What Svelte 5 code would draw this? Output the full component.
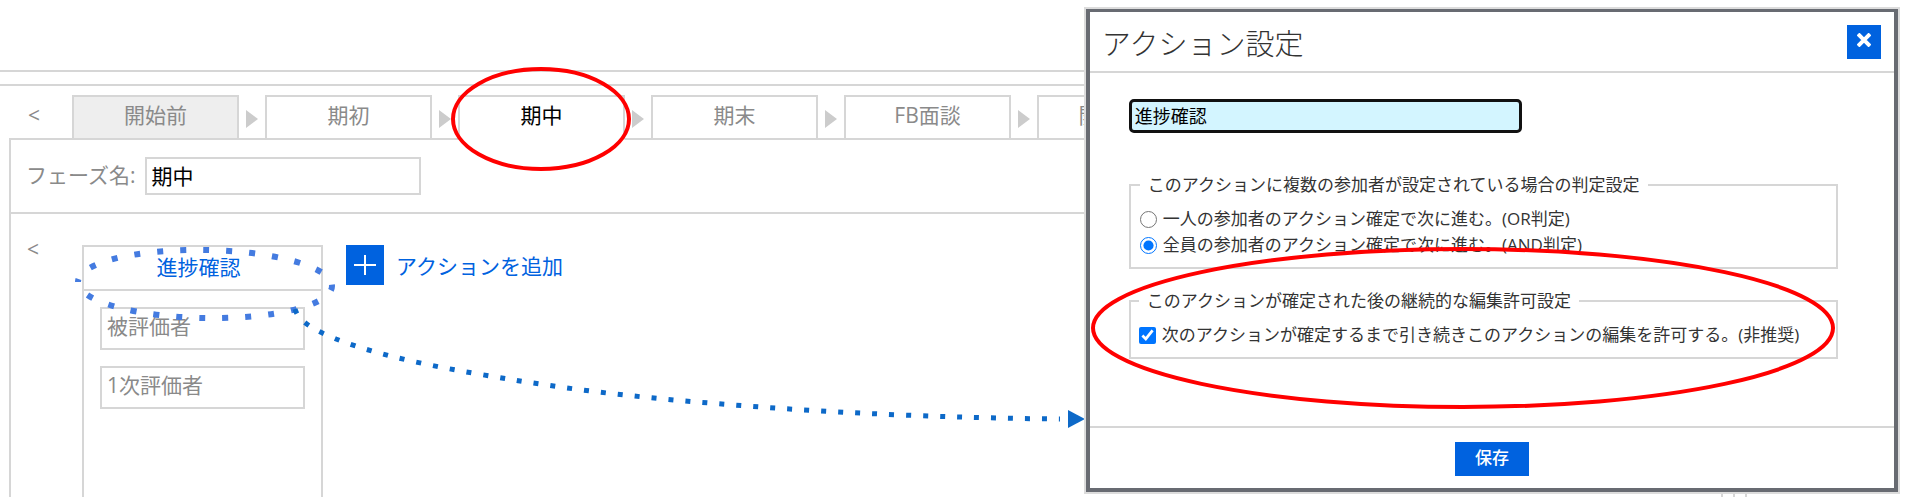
<script lang="ts">
	interface Phase {
		id: number;
		name: string;
		closed?: boolean;
	}

	const phases: Phase[] = [
		{ id: 1, name: '開始前', closed: true },
		{ id: 2, name: '期初' },
		{ id: 3, name: '期中' },
		{ id: 4, name: '期末' },
		{ id: 5, name: 'FB面談' },
		{ id: 6, name: '開示面談' }
	];
	const participants = ['被評価者', '1次評価者'];
	const judgeOptions = [
		{ value: 'or', label: '一人の参加者のアクション確定で次に進む。(OR判定)' },
		{ value: 'and', label: '全員の参加者のアクション確定で次に進む。(AND判定)' }
	];

	let activeId = $state(3);
	let phaseName = $state('期中');
	let actionName = $state('進捗確認');
	let judge = $state('and');
	let allowEdit = $state(true);
	let dialogOpen = $state(true);

	function selectPhase(phase: Phase) {
		activeId = phase.id;
		phaseName = phase.name;
	}
</script>

<div class="page">
	<main class="workflow">
		<div class="toolbar"></div>
		<div class="band"></div>

		<nav class="tabs">
			<button type="button" class="prev">&lt;</button>
			{#each phases as phase (phase.id)}
				<div class="tab-slot">
					<button
						type="button"
						class="tab"
						class:active={phase.id === activeId}
						class:closed={phase.closed}
						onclick={() => selectPhase(phase)}
					>
						{phase.name}
					</button>
					{#if phase.id === 3}
						<svg class="mark tab-mark" width="180" height="104" viewBox="0 0 180 104" aria-hidden="true">
							<ellipse cx="90" cy="52" rx="88" ry="50" />
						</svg>
					{/if}
				</div>
				<svg class="sep" width="12" height="18" viewBox="0 0 12 18" aria-hidden="true">
					<path d="M0 0 12 9 0 18z" />
				</svg>
			{/each}
		</nav>

		<section class="panel">
			<div class="phase-row">
				<label for="phase-name">フェーズ名:</label>
				<input id="phase-name" type="text" bind:value={phaseName} />
			</div>

			<div class="actions">
				<button type="button" class="prev">&lt;</button>
				<div class="card">
					<button type="button" class="card-title" onclick={() => (dialogOpen = true)}>
						{actionName}
					</button>
					<ul>
						{#each participants as participant (participant)}
							<li>{participant}</li>
						{/each}
					</ul>
					<svg class="mark card-mark" width="264" height="76" viewBox="0 0 264 76" aria-hidden="true">
						<path d="M5 35A127 34 1 0 1 259 39A127 34 1 0 1 5 35z" />
					</svg>
				</div>
				<button type="button" class="add">
					<span class="plus">
						<svg width="22" height="20" viewBox="0 0 22 20" aria-hidden="true">
							<path d="M11 0v20M0 10h22" />
						</svg>
					</span>
					<span class="add-label">アクションを追加</span>
				</button>
			</div>
		</section>

		<svg class="mark arrow" width="1086" height="436" viewBox="0 0 1086 436" aria-hidden="true">
			<path
				class="trail"
				d="M295 309C299 324 322 333 336 339C390 360 460 371 520 381C583 391 646 398 709 403C829 413 950 418 1060 419"
			/>
			<path class="head" d="M1068 410 1085 419 1068 428z" />
		</svg>
	</main>

	{#if dialogOpen}
		<aside class="side">
			<div class="dialog" role="dialog" aria-labelledby="dialog-title">
				<header>
					<h2 id="dialog-title">アクション設定</h2>
					<button type="button" class="close" aria-label="閉じる" onclick={() => (dialogOpen = false)}>
						<svg width="14" height="14" viewBox="0 0 14 14" aria-hidden="true">
							<path d="M1 1 13 13M13 1 1 13" />
						</svg>
					</button>
				</header>

				<div class="body">
					<input class="action-name" type="text" aria-label="アクション名" bind:value={actionName} />

					<fieldset>
						<legend>このアクションに複数の参加者が設定されている場合の判定設定</legend>
						{#each judgeOptions as option (option.value)}
							<label class="choice">
								<input type="radio" name="judge" value={option.value} bind:group={judge} />
								{option.label}
							</label>
						{/each}
					</fieldset>

					<fieldset class="edit">
						<legend>このアクションが確定された後の継続的な編集許可設定</legend>
						<label class="choice">
							<input type="checkbox" bind:checked={allowEdit} />
							次のアクションが確定するまで引き続きこのアクションの編集を許可する。(非推奨)
						</label>
						<svg class="mark edit-mark" width="744" height="162" viewBox="0 0 744 162" aria-hidden="true">
							<ellipse cx="372" cy="81" rx="370" ry="79" />
						</svg>
					</fieldset>
				</div>

				<footer>
					<button type="button" class="save">保存</button>
				</footer>
			</div>
			<div class="ticks"><i></i><i></i><i></i></div>
		</aside>
	{/if}
</div>

<style>
	:global(body) {
		background: #fff;
	}

	.page {
		--line: #d6d6d6;
		--muted: #8a8a8a;
		--blue: #0062df;
		display: flex;
		min-height: 100vh;
		overflow: hidden;
		font-family: 'Open Sans', 'Noto Sans CJK JP', sans-serif;
		font-weight: 400;
		font-size: 21px;
		line-height: 24px;
		color: var(--muted);
		text-spacing-trim: space-all;
	}

	* {
		box-sizing: border-box;
	}

	button,
	input {
		font: inherit;
		color: inherit;
	}

	button {
		padding: 0;
		border: none;
		background: none;
		cursor: pointer;
	}

	.mark {
		position: absolute;
		z-index: 2;
		fill: none;
		pointer-events: none;
	}

	.mark ellipse {
		stroke: #f00;
		stroke-width: 4;
	}

	.workflow {
		position: relative;
		flex: 1;
		min-width: 0;
		display: flex;
		flex-direction: column;
		overflow: hidden;
	}

	.toolbar {
		height: 72px;
		border-bottom: 2px solid var(--line);
	}

	.band {
		height: 14px;
		border-bottom: 2px solid var(--line);
	}

	.tabs {
		display: flex;
		align-items: center;
		padding: 9px 0 0 28px;
	}

	.tabs .prev {
		width: 44px;
		padding-bottom: 4px;
	}

	.prev {
		flex: none;
		text-align: left;
	}

	.tab-slot {
		position: relative;
		flex: none;
		margin-bottom: -2px;
	}

	.tab {
		display: block;
		width: 167px;
		height: 45px;
		padding-bottom: 6px;
		border: 2px solid var(--line);
		background: #fff;
	}

	.tab.closed {
		background: #eee;
	}

	.tab.active {
		color: #000;
		border-bottom-color: #fff;
	}

	.tab-mark {
		left: -7px;
		top: -28px;
	}

	.sep {
		flex: none;
		margin: 4px 7px 0;
		fill: #ccc;
	}

	.panel {
		flex: 1;
		display: flex;
		flex-direction: column;
		margin-left: 9px;
		border: 2px solid var(--line);
		border-width: 2px 0 0 2px;
	}

	.phase-row {
		display: flex;
		align-items: center;
		gap: 10px;
		height: 74px;
		padding-left: 15px;
		border-bottom: 2px solid var(--line);
	}

	.phase-row label {
		padding-bottom: 2px;
	}

	.phase-row input {
		width: 276px;
		height: 38px;
		padding: 0 4px 2px;
		border: 2px solid var(--line);
		color: #000;
	}

	.actions {
		flex: 1;
		display: flex;
		align-items: flex-start;
		padding: 31px 0 0 16px;
	}

	.actions .prev {
		width: 55px;
		margin-top: -8px;
	}

	.card {
		position: relative;
		flex: none;
		align-self: stretch;
		width: 241px;
		border: 2px solid var(--line);
		border-bottom: none;
	}

	.card-title {
		display: block;
		width: 100%;
		height: 44px;
		padding: 0 8px 2px 0;
		border-bottom: 2px solid var(--line);
		color: var(--blue);
	}

	.card ul {
		display: grid;
		gap: 16px;
		margin: 0;
		padding: 16px;
		list-style: none;
	}

	.card li {
		height: 43px;
		padding: 5px;
		border: 2px solid var(--line);
	}

	.card-mark {
		left: -11px;
		top: 0;
		stroke: #447be0;
		stroke-width: 6;
		stroke-dasharray: 6 17;
		stroke-dashoffset: 3;
	}

	.add {
		display: flex;
		align-items: center;
		gap: 12px;
		margin-left: 23px;
		color: var(--blue);
		white-space: nowrap;
	}

	.add-label {
		padding-top: 2px;
	}

	.plus {
		display: grid;
		place-items: center;
		width: 38px;
		height: 40px;
		background: var(--blue);
	}

	.plus svg {
		stroke: #fff;
		stroke-width: 2;
	}

	.arrow {
		left: 0;
		top: 0;
	}

	.trail {
		stroke: #0d69c8;
		stroke-width: 5;
		stroke-dasharray: 5 12;
	}

	.head {
		fill: #0d69c8;
	}

	.side {
		flex: none;
		width: 43%;
		padding-top: 7px;
		padding-right: 5px;
		margin-left: 2px;
	}

	.dialog {
		border: 4px solid #686b72;
		border-top-width: 3px;
		outline: 2px solid #dcdcdc;
		margin: 2px;
		margin-left: 0;
		font-size: 17px;
		color: #333;
	}

	.dialog header {
		display: flex;
		align-items: center;
		justify-content: space-between;
		height: 61px;
		padding: 0 13px 0 12px;
		border-bottom: 2px solid var(--line);
	}

	.dialog h2 {
		margin: 0;
		padding-top: 4px;
		font-size: 29px;
		line-height: 36px;
		font-weight: 300;
	}

	.close {
		display: grid;
		place-items: center;
		width: 34px;
		height: 34px;
		padding-bottom: 4px;
		background: var(--blue);
	}

	.close svg {
		stroke: #fff;
		stroke-width: 4;
	}

	.body {
		height: 353px;
		padding: 26px 56px 0 39px;
	}

	.action-name {
		display: block;
		width: 393px;
		height: 34px;
		padding: 0 3px 2px;
		border: 3px solid #111;
		border-radius: 5px;
		background: #d3f5ff;
		font-size: 18px;
		color: #000;
	}

	fieldset {
		position: relative;
		margin: 40px 0 0;
		padding: 9px;
		border: 2px solid var(--line);
	}

	legend {
		padding: 0 8px;
		line-height: 24px;
		white-space: nowrap;
	}

	.edit {
		margin-top: 20px;
		padding: 9px 8px;
	}

	.choice {
		display: flex;
		align-items: center;
		gap: 6px;
		height: 26px;
		white-space: nowrap;
	}

	.choice input {
		width: 17px;
		height: 17px;
		margin: 0;
		accent-color: #0075ff;
	}

	.edit-mark {
		left: -40px;
		top: -66px;
	}

	.dialog footer {
		display: flex;
		justify-content: center;
		padding: 14px 0 12px;
		border-top: 2px solid var(--line);
	}

	.save {
		width: 74px;
		height: 34px;
		padding-bottom: 2px;
		background: var(--blue);
		font-weight: 500;
		color: #fff;
	}

	.ticks {
		display: flex;
		gap: 10px;
		height: 4px;
		padding-left: 78%;
		overflow: hidden;
	}

	.ticks i {
		width: 2px;
		background: var(--line);
	}
</style>
